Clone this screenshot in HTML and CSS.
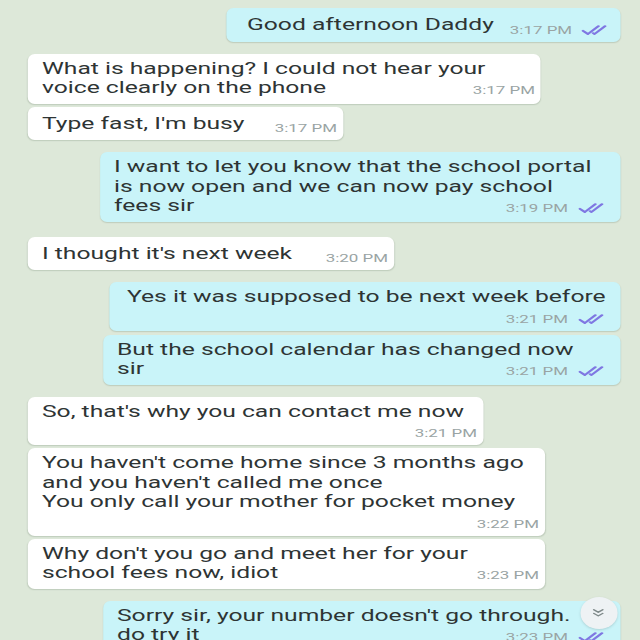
FILE: index.html
```html
<!DOCTYPE html>
<html lang="en">
<head>
<meta charset="utf-8">
<title>Chat</title>
<link rel="stylesheet" href="styles.css">
</head>
<body>
<div class="screen">
  <div class="chat">
    <div class="msg out inline w-393 first">
      <span class="text">Good afternoon Daddy</span>
      <span class="meta"><span class="time">3:17 PM</span><svg class="ticks" viewBox="0 0 17 11"><path d="M1 5.8l3.2 3.2 6.8-7.8M7.6 8.2l.9.8 6.8-7.8"/></svg></span>
    </div>

    <div class="msg in overlap w-513 gap-l">
      <div class="text">What is happening? I could not hear your<br>voice clearly on the phone</div>
      <div class="meta"><span class="time">3:17 PM</span></div>
    </div>
    <div class="msg in inline w-315 gap-s">
      <span class="text">Type fast, I'm busy</span>
      <span class="meta"><span class="time">3:17 PM</span></span>
    </div>

    <div class="msg out overlap w-520 gap-l">
      <div class="text">I want to let you know that the school portal<br>is now open and we can now pay school<br>fees sir</div>
      <div class="meta"><span class="time">3:19 PM</span><svg class="ticks" viewBox="0 0 17 11"><path d="M1 5.8l3.2 3.2 6.8-7.8M7.6 8.2l.9.8 6.8-7.8"/></svg></div>
    </div>

    <div class="msg in inline w-366 gap-xl">
      <span class="text">I thought it's next week</span>
      <span class="meta"><span class="time">3:20 PM</span></span>
    </div>

    <div class="msg out below w-510 gap-l pad-wide">
      <div class="text">Yes it was supposed to be next week before</div>
      <div class="meta"><span class="time">3:21 PM</span><svg class="ticks" viewBox="0 0 17 11"><path d="M1 5.8l3.2 3.2 6.8-7.8M7.6 8.2l.9.8 6.8-7.8"/></svg></div>
    </div>
    <div class="msg out overlap w-517 gap-m">
      <div class="text">But the school calendar has changed now<br>sir</div>
      <div class="meta"><span class="time">3:21 PM</span><svg class="ticks" viewBox="0 0 17 11"><path d="M1 5.8l3.2 3.2 6.8-7.8M7.6 8.2l.9.8 6.8-7.8"/></svg></div>
    </div>

    <div class="msg in below w-455 gap-l">
      <div class="text">So, that's why you can contact me now</div>
      <div class="meta"><span class="time">3:21 PM</span></div>
    </div>
    <div class="msg in below w-517 gap-s">
      <div class="text">You haven't come home since 3 months ago<br>and you haven't called me once<br>You only call your mother for pocket money</div>
      <div class="meta"><span class="time">3:22 PM</span></div>
    </div>
    <div class="msg in overlap w-517 gap-s">
      <div class="text">Why don't you go and meet her for your<br>school fees now, idiot</div>
      <div class="meta"><span class="time">3:23 PM</span></div>
    </div>

    <div class="msg out overlap w-517 gap-l">
      <div class="text">Sorry sir, your number doesn't go through.<br>do try it</div>
      <div class="meta"><span class="time">3:23 PM</span><svg class="ticks" viewBox="0 0 17 11"><path d="M1 5.8l3.2 3.2 6.8-7.8M7.6 8.2l.9.8 6.8-7.8"/></svg></div>
    </div>
  </div>

  <div class="scroll-down" aria-label="Scroll to bottom">
    <svg viewBox="0 0 18 16"><path d="M5 3.5l4 3.5 4-3.5M5 8.5l4 3.5 4-3.5"/></svg>
  </div>
</div>
</body>
</html>
```

FILE: styles.css
```css
:root {
  --s: 1.54;
}

html,
body {
  margin: 0;
  height: 640px;
  overflow: hidden;
}

body {
  background: #dde8d9;
  font-family: Roboto, "Noto Sans", "Liberation Sans", sans-serif;
}

/* the reference is a horizontally stretched phone screenshot */
.screen {
  position: relative;
  width: calc(640px / var(--s));
  height: 640px;
  overflow: hidden;
  transform: scaleX(var(--s));
  transform-origin: 0 0;
}

.chat {
  display: flex;
  flex-direction: column;
  padding: 8px calc(20px / var(--s)) 0 calc(28px / var(--s));
}

.msg {
  box-sizing: border-box;
  font-size: 16px;
  line-height: 19.5px;
  color: #2e3434;
  border-radius: calc(7px / var(--s)) / 7px;
  box-shadow: 0 1px 1px rgba(70, 90, 70, 0.2);
  padding: 5px calc(6px / var(--s)) 6px calc(14px / var(--s));
}

.in {
  align-self: flex-start;
  background: #ffffff;
}

.out {
  align-self: flex-end;
  background: #c9f4f9;
  padding-right: calc(15px / var(--s));
}

.pad-wide {
  padding-left: calc(17px / var(--s));
}

.first.out {
  padding-left: calc(20px / var(--s));
}

.gap-s { margin-top: 3px; }
.gap-m { margin-top: 4px; }
.gap-l { margin-top: 12px; }
.gap-xl { margin-top: 15px; }

.w-315 { width: calc(315px / var(--s)); }
.w-366 { width: calc(366px / var(--s)); }
.w-393 { width: calc(393px / var(--s)); }
.w-455 { width: calc(455px / var(--s)); }
.w-510 { width: calc(510px / var(--s)); }
.w-513 { width: calc(513px / var(--s)); }
.w-517 { width: calc(517px / var(--s)); }
.w-520 { width: calc(520px / var(--s)); }

.text {
  white-space: nowrap;
}

.meta {
  display: flex;
  justify-content: flex-end;
  align-items: center;
  gap: calc(9px / var(--s));
  font-size: 11px;
  line-height: 15px;
  color: #9aa4a4;
  white-space: nowrap;
}

.msg.inline {
  display: flex;
  justify-content: space-between;
  align-items: flex-end;
  gap: calc(16px / var(--s));
  padding-top: 7px;
  padding-bottom: 7px;
}

.inline .meta {
  margin-bottom: -3px;
}

.overlap .meta {
  margin-top: -15px;
}

.below .meta {
  margin-top: 5px;
}

.below {
  padding-bottom: 4px;
}

.ticks {
  width: calc(28px / var(--s));
  height: 11px;
  fill: none;
  stroke: #7f77e2;
  stroke-width: 1.8;
  stroke-linecap: round;
  stroke-linejoin: round;
}

.scroll-down {
  position: absolute;
  top: 597px;
  right: calc(22px / var(--s));
  width: calc(38px / var(--s));
  height: 32px;
  border-radius: 50%;
  background: #eef2f4;
  box-shadow: 0 1px 2px rgba(60, 80, 80, 0.2);
  display: flex;
  align-items: center;
  justify-content: center;
}

.scroll-down svg {
  width: calc(20px / var(--s));
  height: 16px;
  fill: none;
  stroke: #7f8a8a;
  stroke-width: 1.7;
  stroke-linecap: round;
  stroke-linejoin: round;
}
```
